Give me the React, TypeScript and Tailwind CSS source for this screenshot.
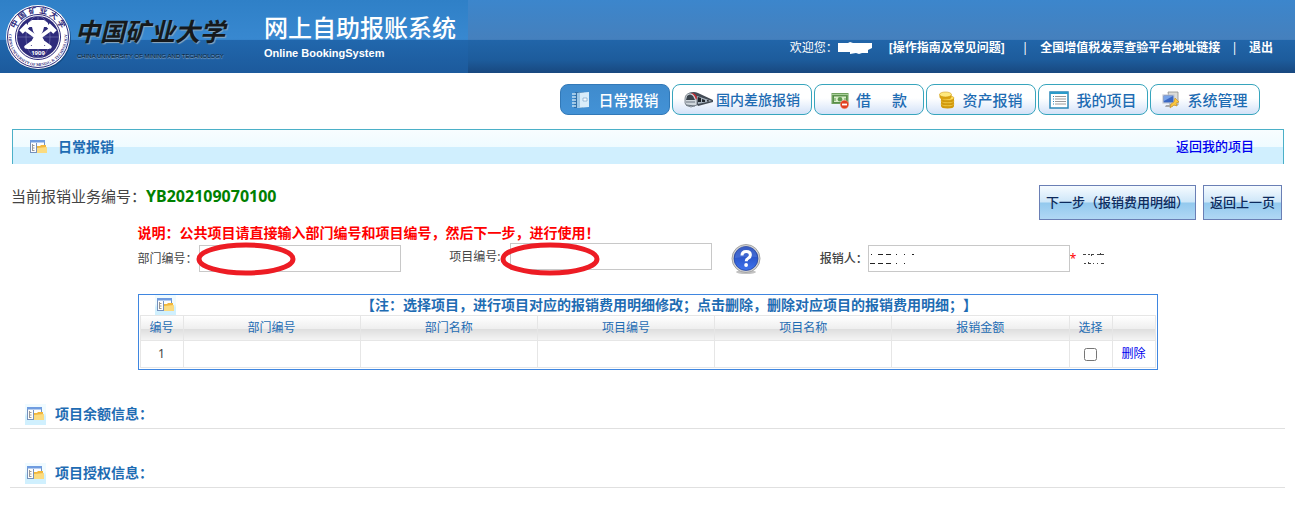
import React, { useState } from 'react';
import { clsx } from 'clsx';

const FONT = 'font-["Noto_Sans","Noto_Sans_CJK_SC",sans-serif]';

function Seal() {
    return (
        <svg className="w-[66px] h-[66px] shrink-0" viewBox="0 0 66 66" aria-hidden="true">
            <defs>
                <path id="sealTop" d="M9 33a24 24 0 0 1 48 0" />
                <path id="sealBottom" d="M4.2 28a29.2 29.2 0 1 0 57.6 0" />
            </defs>
            <circle cx="34" cy="34" r="32" fill="#0d3c70" opacity="0.6" />
            <circle cx="33" cy="33" r="32" fill="#fff" />
            <circle cx="33" cy="33" r="30.5" fill="none" stroke="#2e2b7c" strokeWidth="1" />
            <circle cx="33" cy="33" r="22.5" fill="#fff" stroke="#2e2b7c" strokeWidth="1" />
            <circle cx="33" cy="33" r="21" fill="#2e2b7c" />
            <g stroke="#8b8abf" strokeWidth="0.5" fill="none">
                <path d="M12 33h42M33 12v42" />
                <ellipse cx="33" cy="33" rx="12" ry="21" />
            </g>
            <path d="M27 16h12l4 3v4h-4l-1 4-2 4 3 5v6h5v3H22v-3h5v-6l3-5-2-4-1-4h-4v-4z" fill="#fff" />
            <g stroke="#fff" strokeWidth="3.5" strokeLinecap="round">
                <path d="M20 25l25 18M46 25L21 43" />
            </g>
            <g stroke="#fff" strokeWidth="5">
                <path d="M16 28l7-7M43 21l7 7" />
            </g>
            <text x="33" y="51" fontSize="6" fontWeight="700" fill="#fff" textAnchor="middle">1909</text>
            <text fontSize="8" fontWeight="700" fill="#2e2b7c">
                <textPath href="#sealTop" startOffset="50%" textAnchor="middle">中 国 矿 业 大 学</textPath>
            </text>
            <text fontSize="4" fontWeight="700" fill="#2e2b7c" fontFamily="Liberation Serif">
                <textPath href="#sealBottom" startOffset="50%" textAnchor="middle">CHINA UNIVERSITY OF MINING &amp; TECHNOLOGY</textPath>
            </text>
        </svg>
    );
}

function NotebookIcon() {
    return (
        <svg className="w-5 h-5" viewBox="0 0 20 20" aria-hidden="true">
            <path d="M4 2h9l-1 16H3z" fill="#2f6fa8" />
            <path d="M6 3l12-1v15l-12 1z" fill="#d8ecfa" />
            <path d="M6 3l3-.3v15.100l-3 .2z" fill="#9cc6e6" />
            <path d="M12 8h4v3h-4z" fill="#f7fbff" stroke="#6d9cc2" strokeWidth="0.6" />
            <path d="M1 4h4M1 7h4M1 10h4M1 13h4M1 16h4" stroke="#c4dff2" strokeWidth="1.300" />
        </svg>
    );
}

function TrainIcon() {
    return (
        <svg className="w-[30px] h-5" viewBox="0 0 30 20" aria-hidden="true">
            <path d="M5 3q5-2 9 0l15 7v2l-15 4z" fill="#434b55" />
            <path d="M13 6l15 5-14 3z" fill="#a9b5c0" />
            <path d="M14 7l3 1v4h-3zM18 9l3 1v2h-3zM23 10l2 .5v1h-2z" fill="#20262c" />
            <path d="M1 9q0-5 5-6 5 0 7 5v7l-6 2q-6-1-6-4z" fill="#cfd6dc" stroke="#59636d" strokeWidth="0.7" />
            <path d="M3 6q3-3 6 0l2 4H2z" fill="#39434c" />
            <path d="M7 3q5 0 6 5l-1 2q-1-5-5-7z" fill="#c3272e" />
            <path d="M2 12l9 0M2 15l9 1" stroke="#6a7580" strokeWidth="1" />
        </svg>
    );
}

function LoanIcon() {
    return (
        <svg className="w-[18px] h-5" viewBox="0 0 18 20" aria-hidden="true">
            <rect x="0.500" y="3" width="17" height="11" fill="#6fa05d" />
            <rect x="2.500" y="6" width="13" height="6.500" fill="#d9edc9" stroke="#47803a" strokeWidth="0.8" />
            <path d="M1 4.500h16" stroke="#a8cf98" strokeWidth="1" />
            <circle cx="9" cy="9.200" r="2.300" fill="#5d994d" />
            <path d="M4 8v3M14 8v2" stroke="#5d994d" strokeWidth="1" />
            <circle cx="13.500" cy="14.500" r="4.200" fill="#e2401f" stroke="#f7a08b" strokeWidth="0.5" />
            <path d="M11 14.500h5" stroke="#fff" strokeWidth="1.800" />
        </svg>
    );
}

function CoinsIcon() {
    return (
        <svg className="w-4 h-[18px]" viewBox="0 0 16 18" aria-hidden="true">
            {[13, 10, 7].map(y => (
                <g key={y}>
                    <path d={`M2 ${y}v2q0 2.500 6.500 2.500t6.500-2.500v-2z`} fill="#d29a0c" />
                    <ellipse cx="8.500" cy={y} rx="6.500" ry="2.300" fill="#ffe164" stroke="#c98f06" strokeWidth="0.5" />
                </g>
            ))}
            <path d="M.5 3.500v2.500q0 2.500 6 2.500t6-2.500v-2.500z" fill="#d9a313" />
            <ellipse cx="6.500" cy="3.500" rx="6" ry="2.500" fill="#ffe97e" stroke="#c98f06" strokeWidth="0.5" />
        </svg>
    );
}

function ListIcon() {
    return (
        <svg className="w-5 h-[18px]" viewBox="0 0 20 18" aria-hidden="true">
            <rect x="1" y="1" width="18" height="16" fill="#fff" stroke="#2b87b8" strokeWidth="1.500" />
            <path d="M1 1h18v2H1z" fill="#2b9bc9" />
            <path d="M4 5.500h1M4 8h1M4 10.500h1M4 13h1" stroke="#2b87b8" strokeWidth="1" />
            <path d="M6 5.500h11M6 8h11M6 10.500h11M6 13h11" stroke="#999" strokeWidth="1.200" />
        </svg>
    );
}

function SystemIcon() {
    return (
        <svg className="w-[18px] h-[18px]" viewBox="0 0 18 18" aria-hidden="true">
            <path d="M6 1h10v13H8z" fill="#dcdcd8" stroke="#8d8d8a" strokeWidth="0.8" />
            <rect x="1" y="4" width="11" height="8" fill="#3a68c4" stroke="#c3c8d2" strokeWidth="1.200" />
            <path d="M2 5l9 0-9 5z" fill="#79a4e8" />
            <path d="M4 14h6l1 2H3z" fill="#a7a9ad" />
            <path d="M13 7l4 4-3 1 1 3-3-1-4 3 1-4 3-2z" fill="#fbc840" stroke="#c78c16" strokeWidth="0.6" />
        </svg>
    );
}

function FolderIcon({ plain }: { plain?: boolean }) {
    return (
        <svg
            className={clsx('w-[21px] h-[21px] shrink-0', !plain && 'bg-linear-to-b from-[#f0fbff] from-40% to-[#d0f0fe] to-60%')}
            viewBox="0 0 21 21"
            aria-hidden="true"
        >
            <rect x="2.500" y="3.500" width="14" height="12" fill="#fdfdfd" stroke="#7591bd" />
            <path d="M2 3h15v2.500H2z" fill="#6f9ce0" />
            <path d="M8.500 6v9" stroke="#7591bd" />
            <path d="M4.500 7v7M4.500 8.500h2M4.500 11h2M4.500 13.500h2" stroke="#999" fill="none" />
            <path d="M9 9h3l1-1h5v8H9z" fill="#f2b73c" />
            <path d="M9 11l10-1v6H9z" fill="#fbdb80" />
        </svg>
    );
}

function HelpIcon() {
    return (
        <svg className="w-[30px] h-[30px]" viewBox="0 0 30 30" aria-hidden="true">
            <defs>
                <linearGradient id="helpBlue" x1="0" y1="0" x2="0" y2="1">
                    <stop offset="0" stopColor="#1d3fae" />
                    <stop offset="1" stopColor="#3f74ee" />
                </linearGradient>
            </defs>
            <ellipse cx="15" cy="28" rx="10" ry="2" fill="#999" opacity="0.6" />
            <circle cx="15" cy="14.500" r="14" fill="#d3d3d3" stroke="#a5a5a5" strokeWidth="1" />
            <circle cx="15" cy="14.500" r="12" fill="url(#helpBlue)" stroke="#1f3c94" strokeWidth="0.7" />
            <path d="M4 14a11 11 0 0 1 22-1q-10-1-22 1z" fill="#6d93e6" opacity="0.35" />
            <path d="M11 11.500q0-4 4.200-4t4.200 3.600q0 2-2.200 3.200-2 1.100-2 3" fill="none" stroke="#fff" strokeWidth="3" />
            <circle cx="15.100" cy="21" r="1.900" fill="#fff" />
        </svg>
    );
}

// hand drawn red ring around the start of a field
function Ring({ className }: { className: string }) {
    return (
        <svg className={clsx('absolute pointer-events-none w-[101px] h-[34px]', className)} viewBox="0 0 101 34" aria-hidden="true">
            <ellipse cx="50" cy="17" rx="47" ry="14" fill="none" stroke="#ed1c24" strokeWidth="5" />
        </svg>
    );
}

const TABS = [
    { label: '日常报销', icon: <NotebookIcon />, active: true },
    { label: '国内差旅报销', icon: <TrainIcon />, wide: true },
    { label: '借', tail: '款', icon: <LoanIcon /> },
    { label: '资产报销', icon: <CoinsIcon /> },
    { label: '我的项目', icon: <ListIcon /> },
    { label: '系统管理', icon: <SystemIcon /> },
];

const COLUMNS = ['编号', '部门编号', '部门名称', '项目编号', '项目名称', '报销金额', '选择', ''];

const INPUT = 'w-[202px] h-[27px] border border-[#c8c8c8] bg-white px-0.5 outline-none';
const BUTTON = 'h-[35px] px-1.5 border border-[#6a7fb5] bg-[linear-gradient(180deg,#f6fbff_0%,#cde6f8_49%,#93c9ee_51%,#b0d7f4_100%)] text-[13px] font-medium text-[#0d2a5c]';

export default function App() {
    const [checked, setChecked] = useState(false);

    return (
        <div className={clsx(FONT, 'bg-white text-xs text-[#444] pb-4')}>
            <header className="h-[73px] flex justify-between bg-[linear-gradient(180deg,#3c86cc_0%,#4580bd_54%,#2165a9_55%,#1d5c9c_82%,#18487f_100%)]">
                <div className="flex items-start w-[468px] pl-[5px] pt-1 bg-[linear-gradient(180deg,#2f80c7_0%,#3888d0_54%,#2167ad_55%,#1c5a9c_100%)]">
                    <Seal />
                    <div className="ml-1 pt-1.5 w-[150px] whitespace-nowrap">
                        <p className="text-[25px] leading-[42px] font-bold italic text-[#16191c] [text-shadow:1px_1px_1px_#8fa9bd]">中国矿业大学</p>
                        <p className="pl-0.5 text-[6px] leading-[8px] font-['Liberation_Sans',sans-serif] text-[#0b1c2e] [text-shadow:0_1px_1px_#9db4c8]">
                            CHINA UNIVERSITY OF MINING AND TECHNOLOGY
                        </p>
                    </div>
                    <div className="ml-[39px] pt-2 text-white whitespace-nowrap">
                        <h1 className="text-2xl leading-8 font-medium">网上自助报账系统</h1>
                        <p className="text-[11px] leading-[18px] font-bold font-['Liberation_Sans',sans-serif]">Online BookingSystem</p>
                    </div>
                </div>
                <div className="flex items-center h-4 mt-10 pr-[22px] text-white font-bold whitespace-nowrap">
                    <span className="font-normal">欢迎您：</span>
                    <svg className="w-[34px] h-3 mr-[17px]" viewBox="0 0 34 12" aria-hidden="true">
                        <path d="M0 1h10l2-1 3 1h19v5l-4 2v3h-6l-3 1-3-1-6 1v-2H0z" fill="#fff" />
                    </svg>
                    <a href="#guide">[操作指南及常见问题]</a>
                    <span className="ml-[17px] mr-3 font-normal">|</span>
                    <a href="#invoice">全国增值税发票查验平台地址链接</a>
                    <span className="mx-[11px] font-normal">|</span>
                    <a href="#logout">退出</a>
                </div>
            </header>

            <nav className="flex justify-end gap-0.5 mt-[11px] pr-[35px]">
                {TABS.map(tab => (
                    <a
                        key={tab.label}
                        href="#tab"
                        className={clsx(
                            'flex items-center justify-center h-[31px] border rounded-lg font-medium whitespace-nowrap',
                            tab.wide ? 'w-[140px] gap-0.5 text-sm' : 'w-[110px] gap-[7px] text-[15px]',
                            tab.active
                                ? 'border-[#3279b8] bg-linear-to-b from-[#3f8bcd] to-[#4392d6] text-white'
                                : 'border-[#37a5bd] bg-linear-to-b from-white from-45% to-[#d3e2f8] text-[#1e6cb3]'
                        )}
                    >
                        {tab.icon}
                        <span>{tab.label}</span>
                        {tab.tail && <span className="ml-3.5">{tab.tail}</span>}
                    </a>
                ))}
            </nav>

            <div className="flex items-center h-[35px] mt-3.5 ml-3 mr-[11px] pl-[15px] pr-[29px] border border-b-0 border-[#4bb0c8] bg-[linear-gradient(180deg,#f8fdff_0%,#effbff_50%,#d0effe_51%,#d0effe_100%)]">
                <FolderIcon plain />
                <h2 className="ml-[9px] text-sm font-bold text-[#1e6cb3]">日常报销</h2>
                <a href="#projects" className="ml-auto text-[13px] font-medium text-[#0000ee]">返回我的项目</a>
            </div>

            <main className="px-2.5">
                <div className="flex items-start h-[35px] mt-[21px] pl-px pr-[3px] whitespace-nowrap">
                    <p className="text-[15px] leading-[22px]">当前报销业务编号：</p>
                    <b className="text-base leading-[22px] text-[#008000]">YB202109070100</b>
                    <div className="flex gap-[7px] ml-auto">
                        <button type="button" className={BUTTON}>下一步（报销费用明细）</button>
                        <button type="button" className={BUTTON}>返回上一页</button>
                    </div>
                </div>

                <div className="w-4/5 mx-auto">
                    <p className="mt-0.5 text-sm leading-[21px] font-bold text-[#ff0000]">
                        说明：公共项目请直接输入部门编号和项目编号，然后下一步，进行使用！
                    </p>
                    <div className="grid grid-cols-[312fr_371fr_338fr] items-start whitespace-nowrap">
                        <div className="relative flex items-center pt-0.5">
                            <label htmlFor="dept" className="w-[61px]">部门编号：</label>
                            <input id="dept" type="text" className={INPUT} />
                            <Ring className="left-[58px] -top-px" />
                        </div>
                        <div className="relative flex items-start">
                            <label htmlFor="project" className="w-[61px] leading-[27px]">项目编号:</label>
                            <input id="project" type="text" className={INPUT} />
                            <Ring className="left-[51px] -top-px" />
                            <button type="button" aria-label="帮助" className="ml-[19px] pt-px">
                                <HelpIcon />
                            </button>
                        </div>
                        <div className="flex items-center pt-0.5">
                            <label htmlFor="person" className="w-12 font-medium">报销人：</label>
                            <div className="relative">
                                <input id="person" type="text" className={INPUT} />
                                <svg className="absolute left-0.5 top-2 w-12 h-3 pointer-events-none" viewBox="0 0 48 12" aria-hidden="true">
                                    <path d="M1 1.500h1M8 1.500h5M16 1.500h5M26 1.500h1M34 1.500h1M42 1.500h2M0 10.500h5M8 10.500h5M16 10.500h5M26 10.500h1M34 10.500h1" stroke="#222" fill="none" />
                                </svg>
                            </div>
                            <span className="text-[#ff0000]">*</span>
                            <svg className="ml-1.5 w-6 h-3" viewBox="0 0 24 12" aria-hidden="true">
                                <path d="M1 1.500h3M6 1.500h2M9 1.500h3M15 1.500h7M2 10.500h2M6 10.500h3M11 10.500h1M15 10.500h1M19 10.500h3M9.500 1v2M18.500 0v2M6.500 9v2" stroke="#444" fill="none" />
                            </svg>
                        </div>
                    </div>

                    <div className="mt-5 p-px pt-0 border border-[#3f86e0]">
                        <table className="w-full table-fixed border-collapse text-center">
                            <colgroup>
                                <col className="w-[43px]" />
                                <col span={5} />
                                <col className="w-[43px]" />
                                <col className="w-[43px]" />
                            </colgroup>
                            <thead className="text-[#1e6cb3]">
                                <tr className="h-5">
                                    <td className="p-0">
                                        <div className="flex justify-end h-5 pr-[7px] overflow-hidden">
                                            <FolderIcon />
                                        </div>
                                    </td>
                                    <th colSpan={7} className="p-0 text-sm leading-5 font-bold [text-spacing-trim:space-all]">
                                        【注：选择项目，进行项目对应的报销费用明细修改；点击删除，删除对应项目的报销费用明细；】
                                    </th>
                                </tr>
                                <tr className="h-[25px] bg-[linear-gradient(180deg,#ffffff_0%,#efefef_50%,#dedede_52%,#f6f6f6_100%)]">
                                    {COLUMNS.map((name, i) => (
                                        <th key={i} className="p-0 border border-[#e6e6e6] font-normal">{name}</th>
                                    ))}
                                </tr>
                            </thead>
                            <tbody>
                                <tr className="h-[27px]">
                                    <td className="p-0 border border-[#e6e6e6]">1</td>
                                    <td className="border border-[#e6e6e6]" />
                                    <td className="border border-[#e6e6e6]" />
                                    <td className="border border-[#e6e6e6]" />
                                    <td className="border border-[#e6e6e6]" />
                                    <td className="border border-[#e6e6e6]" />
                                    <td className="p-0 border border-[#e6e6e6]">
                                        <input
                                            type="checkbox"
                                            aria-label="选择"
                                            className="block mx-auto w-[13px] h-[13px]"
                                            checked={checked}
                                            onChange={e => setChecked(e.target.checked)}
                                        />
                                    </td>
                                    <td className="p-0 border border-[#e6e6e6]">
                                        <a href="#delete" className="text-[#0000ee]">删除</a>
                                    </td>
                                </tr>
                            </tbody>
                        </table>
                    </div>
                </div>

                {['项目余额信息：', '项目授权信息：'].map(title => (
                    <section key={title} className="flex items-center h-[29px] mt-[30px] pl-[15px] border-b border-[#e0e0e0]">
                        <FolderIcon />
                        <h3 className="ml-[9px] text-sm font-bold text-[#1e6cb3]">{title}</h3>
                    </section>
                ))}
            </main>
        </div>
    );
}
